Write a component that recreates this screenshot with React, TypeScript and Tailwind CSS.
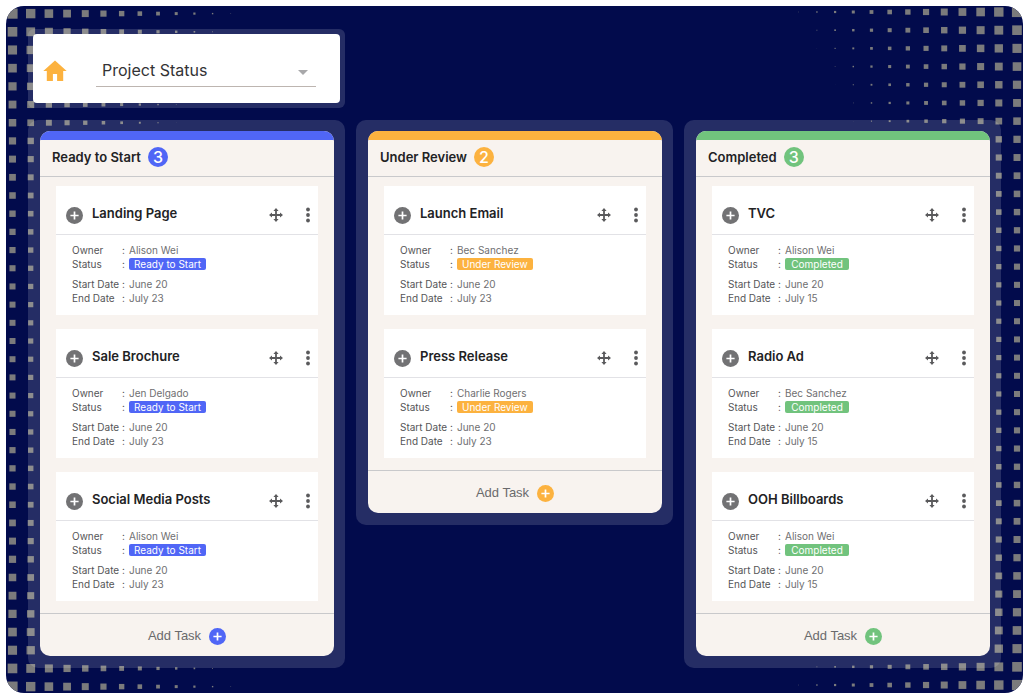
import { useState } from "react";
import type { ReactNode } from "react";

type Task = { title: string; owner: string; start: string; end: string };

type Theme = { fill: string; text: string };

type ColumnData = { name: string; theme: Theme; tasks: Task[] };

const BLUE: Theme = { fill: "bg-[#5066f6]", text: "text-[#5066f6]" };
const AMBER: Theme = { fill: "bg-[#fcb23f]", text: "text-[#fcb23f]" };
const GREEN: Theme = { fill: "bg-[#71c37d]", text: "text-[#71c37d]" };

const COLUMNS: ColumnData[] = [
  {
    name: "Ready to Start",
    theme: BLUE,
    tasks: [
      { title: "Landing Page", owner: "Alison Wei", start: "June 20", end: "July 23" },
      { title: "Sale Brochure", owner: "Jen Delgado", start: "June 20", end: "July 23" },
      { title: "Social Media Posts", owner: "Alison Wei", start: "June 20", end: "July 23" },
    ],
  },
  {
    name: "Under Review",
    theme: AMBER,
    tasks: [
      { title: "Launch Email", owner: "Bec Sanchez", start: "June 20", end: "July 23" },
      { title: "Press Release", owner: "Charlie Rogers", start: "June 20", end: "July 23" },
    ],
  },
  {
    name: "Completed",
    theme: GREEN,
    tasks: [
      { title: "TVC", owner: "Alison Wei", start: "June 20", end: "July 15" },
      { title: "Radio Ad", owner: "Bec Sanchez", start: "June 20", end: "July 15" },
      { title: "OOH Billboards", owner: "Alison Wei", start: "June 20", end: "July 15" },
    ],
  },
];

const ROWS = 38;
const COLS = 15;
const PITCH = 18.19;

/* Halftone squares that shrink away from the panel's side edges. */
function Halftone({ side }: { side: "left" | "right" }) {
  const squares = [];
  for (let row = 0; row < ROWS; row++) {
    const t = Math.abs(row - 18.5) / 18.5;
    const base = 6 + 4.2 * Math.pow(t, 2.6);
    for (let col = 0; col < COLS; col++) {
      const size = base - 0.8 * col;
      if (size < 0.2) continue;
      const cx = side === "left" ? 6.5 + col * PITCH : 294 - col * PITCH;
      const cy = (side === "left" ? 7.6 : 6) + row * PITCH;
      squares.push(
        <rect key={`${row}-${col}`} x={cx - size / 2} y={cy - size / 2} width={size} height={size} />,
      );
    }
  }
  return (
    <svg
      aria-hidden="true"
      width="300"
      height="687"
      viewBox="0 0 300 687"
      fill="#7b7b7c"
      className={side === "left" ? "absolute top-0 left-0" : "absolute top-0 right-0"}
    >
      {squares}
    </svg>
  );
}

function PlusDisc({ className }: { className: string }) {
  return (
    <svg aria-hidden="true" viewBox="0 0 17 17" className={`size-[17px] ${className}`}>
      <circle cx="8.5" cy="8.5" r="8.5" fill="currentColor" />
      <path d="M8.5 4.4v8.2M4.4 8.5h8.2" stroke="#fff" strokeWidth="1.7" />
    </svg>
  );
}

function MoveIcon() {
  return (
    <svg aria-hidden="true" viewBox="0 0 14 14" className="size-[14px]">
      <path d="M7 2v10M2 7h10" stroke="currentColor" strokeWidth="1.8" />
      <path
        d="M7 0 9.6 3H4.4ZM7 14 4.4 11h5.2ZM0 7 3 4.4v5.2ZM14 7l-3 2.6V4.4Z"
        fill="currentColor"
      />
    </svg>
  );
}

function DotsIcon() {
  return (
    <svg aria-hidden="true" viewBox="0 0 4 16" className="h-4 w-1" fill="currentColor">
      <circle cx="2" cy="2.5" r="1.9" />
      <circle cx="2" cy="8" r="1.9" />
      <circle cx="2" cy="13.5" r="1.9" />
    </svg>
  );
}

function Detail({ label, children }: { label: string; children: ReactNode }) {
  return (
    <div className="flex h-[14px] items-center">
      <dt className="flex w-[57px] justify-between pr-1 text-[#555557]">
        <span>{label}</span>
        <span>:</span>
      </dt>
      <dd>{children}</dd>
    </div>
  );
}

function TaskCard({ task, status, theme }: { task: Task; status: string; theme: Theme }) {
  return (
    <article className="bg-white">
      <header className="flex h-[49px] items-center border-b border-[#e2e2e6] pt-[10px] pr-2 pl-[10px] text-[#5a5a5c]">
        <button type="button" aria-label={`Expand ${task.title}`} className="text-[#727274]">
          <PlusDisc className="block" />
        </button>
        <h3 className="flex-1 pb-1 pl-[9px] text-[13px] leading-4 font-semibold text-[#222224]">
          {task.title}
        </h3>
        <button type="button" aria-label={`Move ${task.title}`}>
          <MoveIcon />
        </button>
        <button type="button" aria-label={`More options for ${task.title}`} className="ml-[23px]">
          <DotsIcon />
        </button>
      </header>
      <dl className="px-4 pt-[8px] pb-[10px] text-[10px] leading-[14px] text-[#6f6f71]">
        <Detail label="Owner">{task.owner}</Detail>
        <Detail label="Status">
          <span
            className={`block h-[12px] min-w-16 rounded-xs px-[5px] text-center leading-[12px] text-white ${theme.fill}`}
          >
            {status}
          </span>
        </Detail>
        <div className="pt-[6px]">
          <Detail label="Start Date">{task.start}</Detail>
          <Detail label="End Date">{task.end}</Detail>
        </div>
      </dl>
    </article>
  );
}

function Column({ name, theme, tasks }: ColumnData) {
  return (
    <section className="rounded-[10px] bg-white/14 pt-[11px] pr-[11px] pb-3 pl-3">
      <div className="overflow-hidden rounded-[10px] bg-[#f8f3ef]">
        <div className={`h-[9px] ${theme.fill}`} />
        <header className="flex h-[37px] items-center gap-[7px] border-b border-[#c9c9cb] px-3 pb-[2px]">
          <h2 className="text-[13px] leading-4 font-semibold text-[#222224]">{name}</h2>
          <span
            className={`flex size-5 items-center justify-center rounded-full text-base leading-none font-medium text-white ${theme.fill}`}
          >
            {tasks.length}
          </span>
        </header>
        <div className="flex flex-col gap-[14px] px-4 pt-[9px] pb-3">
          {tasks.map((task) => (
            <TaskCard key={task.title} task={task} status={name} theme={theme} />
          ))}
        </div>
        <footer className="border-t border-[#c9c9cb]">
          <button
            type="button"
            className="flex h-[42px] w-full items-center justify-center gap-2 pt-[2px] font-['Liberation_Sans',sans-serif] text-[13px] text-[#6a6a6c]"
          >
            Add Task
            <PlusDisc className={theme.text} />
          </button>
        </footer>
      </div>
    </section>
  );
}

export default function App() {
  const [view, setView] = useState("Project Status");
  return (
    <div className="flex min-h-screen flex-col bg-white pt-[6px] pr-px pl-[6px] font-['Inter',sans-serif]">
      <main className="relative flex-1 overflow-hidden rounded-[18px] bg-[#020b4c]">
        <Halftone side="left" />
        <Halftone side="right" />
        <div className="relative pt-[23px] pr-[22px] pb-6 pl-[22px]">
          <nav className="w-[317px] rounded-md bg-white/14 p-[5px]">
            <div className="flex h-[69px] items-center gap-[29px] rounded bg-white pt-[5px] pr-6 pl-[10px]">
              <a href="#home" aria-label="Home">
                <svg viewBox="0 0 24 22" className="h-[22px] w-6" fill="#fcb23f" aria-hidden="true">
                  <path d="M12 .6.3 11.1h3.5V21h6.1v-6.9h4.2V21h6.1v-9.9h3.5Z" />
                </svg>
              </a>
              <div className="relative flex-1">
                <select
                  aria-label="View"
                  value={view}
                  onChange={(event) => setView(event.target.value)}
                  className="block h-8 w-full appearance-none border-b border-[#bdb5b0] bg-transparent pb-[2px] pl-[6px] text-base text-[#333335] outline-none"
                >
                  <option>Project Status</option>
                </select>
                <svg
                  aria-hidden="true"
                  viewBox="0 0 10 5"
                  className="pointer-events-none absolute top-[15px] right-2 h-[5px] w-[10px]"
                  fill="#a8a8aa"
                >
                  <path d="M0 0h10L5 5Z" />
                </svg>
              </div>
            </div>
          </nav>
          <div className="grid grid-cols-3 items-start gap-[11px] pt-3">
            {COLUMNS.map((column) => (
              <Column key={column.name} {...column} />
            ))}
          </div>
        </div>
      </main>
    </div>
  );
}
